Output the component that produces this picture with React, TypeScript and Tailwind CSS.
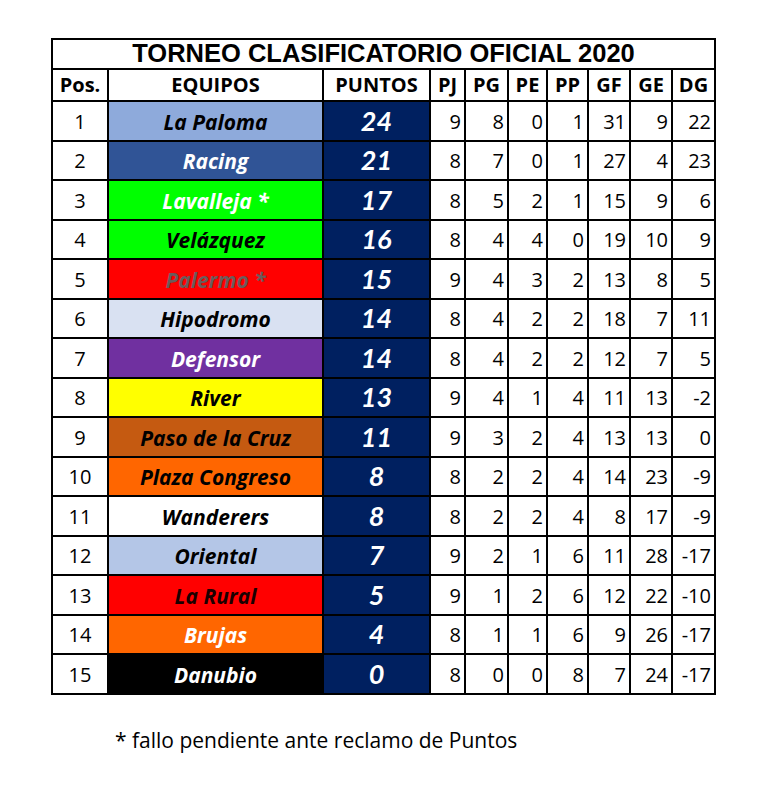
const rows: [number, string, string, string, number, number[]][] = [
  [1, "La Paloma", "bg-[#8eaadb]", "text-black", 24, [9, 8, 0, 1, 31, 9, 22]],
  [2, "Racing", "bg-[#305496]", "text-white", 21, [8, 7, 0, 1, 27, 4, 23]],
  [3, "Lavalleja *", "bg-[#00ff00]", "text-white", 17, [8, 5, 2, 1, 15, 9, 6]],
  [4, "Velázquez", "bg-[#00ff00]", "text-black", 16, [8, 4, 4, 0, 19, 10, 9]],
  [5, "Palermo *", "bg-[#ff0000]", "text-[#6b5b5b]", 15, [9, 4, 3, 2, 13, 8, 5]],
  [6, "Hipodromo", "bg-[#d9e1f2]", "text-black", 14, [8, 4, 2, 2, 18, 7, 11]],
  [7, "Defensor", "bg-[#7030a0]", "text-white", 14, [8, 4, 2, 2, 12, 7, 5]],
  [8, "River", "bg-[#ffff00]", "text-black", 13, [9, 4, 1, 4, 11, 13, -2]],
  [9, "Paso de la Cruz", "bg-[#c55a11]", "text-black", 11, [9, 3, 2, 4, 13, 13, 0]],
  [10, "Plaza Congreso", "bg-[#ff6600]", "text-black", 8, [8, 2, 2, 4, 14, 23, -9]],
  [11, "Wanderers", "bg-white", "text-black", 8, [8, 2, 2, 4, 8, 17, -9]],
  [12, "Oriental", "bg-[#b4c6e7]", "text-black", 7, [9, 2, 1, 6, 11, 28, -17]],
  [13, "La Rural", "bg-[#ff0000]", "text-[#1a0000]", 5, [9, 1, 2, 6, 12, 22, -10]],
  [14, "Brujas", "bg-[#ff6600]", "text-white", 4, [8, 1, 1, 6, 9, 26, -17]],
  [15, "Danubio", "bg-black", "text-white", 0, [8, 0, 0, 8, 7, 24, -17]],
];

const heads = ["PJ", "PG", "PE", "PP", "GF", "GE", "DG"];

export default function App() {
  return (
    <div className="w-[768px] h-[793px] bg-white font-['Open_Sans',sans-serif] text-black">
      <div className="ml-[51px] pt-[38px] w-[665px]">
        <div className="bg-black p-[2px] grid gap-[2px] grid-cols-[54px_213px_105px_33px_41px_37px_39px_40px_40px_41px] grid-rows-[28px_30px_repeat(15,37.5px)]">
          <div className="col-span-10 bg-white flex items-center justify-center font-['Liberation_Sans',Arial,sans-serif] font-bold text-[25.5px] leading-none">
            TORNEO CLASIFICATORIO OFICIAL 2020
          </div>
          <div className="bg-white flex items-center justify-center font-bold text-[20px]">Pos.</div>
          <div className="bg-white flex items-center justify-center font-bold text-[20px]">EQUIPOS</div>
          <div className="bg-white flex items-center justify-center font-bold text-[20px]">PUNTOS</div>
          {heads.map((h) => (
            <div key={h} className="bg-white flex items-center justify-center font-bold text-[20px]">{h}</div>
          ))}
          {rows.map(([pos, name, bg, fg, pts, nums]) => (
            <div key={pos} className="contents">
              <div className="bg-white flex items-center justify-center pt-[2px] text-[20px]">{pos}</div>
              <div className={`${bg} ${fg} flex items-center justify-center pt-[3px] font-bold italic text-[21px]`}>{name}</div>
              <div className="bg-[#002060] text-white flex items-center justify-center font-['Lato',sans-serif] font-bold italic text-[27px]">{pts}</div>
              {nums.map((n, i) => (
                <div key={i} className="bg-white flex items-center justify-end pr-[3px] pt-[2px] text-[20px]">{n}</div>
              ))}
            </div>
          ))}
        </div>
      </div>
      <p className="ml-[115px] mt-[30px] text-[21px]">* fallo pendiente ante reclamo de Puntos</p>
    </div>
  );
}
